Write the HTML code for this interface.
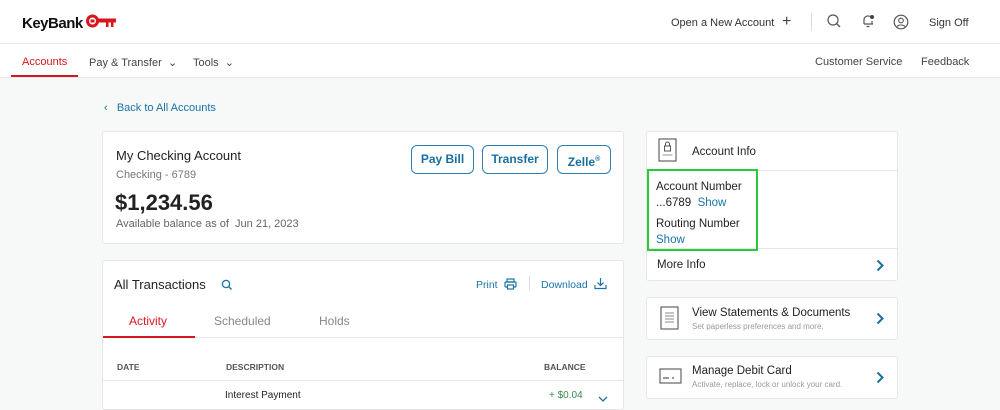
<!DOCTYPE html>
<html><head><meta charset="utf-8"><style>
*{margin:0;padding:0;box-sizing:border-box}
body{width:1000px;height:400px;overflow:hidden;background:#f7f8f8;font-family:"Liberation Sans",sans-serif;color:#222;position:relative}
.a{position:absolute;white-space:nowrap}
.blue{color:#1a73a8}
.card{position:absolute;background:#fff;border:1px solid #e6e6e6;border-radius:3px}
.btn{position:absolute;border:1px solid #2a7fae;border-radius:6px;color:#1a6fa0;font-size:12px;font-weight:bold;text-align:center;line-height:27px;height:29px;top:145px}
.chev{position:absolute;left:876px}
</style></head><body>
<div class="a" style="left:0;top:0;width:1000px;height:44px;background:#fff;border-bottom:1px solid #eaeaea"></div>
<div class="a" style="left:0;top:44px;width:1000px;height:34px;background:#fff;border-bottom:1px solid #eaeaea"></div>
<div class="a" style="left:22px;top:15px;font-size:15px;font-weight:bold;letter-spacing:-0.5px;color:#111">KeyBank</div>
<svg class="a" style="left:86px;top:14px" width="32" height="14" viewBox="0 0 32 14"><circle cx="6.5" cy="7" r="5" fill="none" stroke="#d7171f" stroke-width="3"/><rect x="4.5" y="5.5" width="4" height="3" fill="#d7171f"/><rect x="11" y="4.5" width="19" height="4" fill="#d7171f"/><rect x="20" y="8" width="2.5" height="5" fill="#d7171f"/><rect x="25" y="8" width="2.5" height="5" fill="#d7171f"/></svg>
<div class="a" style="left:671px;top:17px;font-size:11px;color:#333">Open a New Account</div>
<div class="a" style="left:782px;top:13px;font-size:16px;color:#444">+</div>
<div class="a" style="left:811px;top:13px;width:1px;height:18px;background:#ddd"></div>
<svg class="a" style="left:827px;top:14px" width="14" height="15"><circle cx="6" cy="6" r="5" fill="none" stroke="#555" stroke-width="1.2"/><line x1="9.5" y1="9.5" x2="13" y2="13" stroke="#555" stroke-width="1.3"/></svg>
<svg class="a" style="left:861px;top:13px" width="14" height="16"><path d="M3 11V7a4 4 0 0 1 6-3.5M3 11h9M11 8v3M5.5 13.5h3" fill="none" stroke="#555" stroke-width="1.2"/><circle cx="11" cy="4" r="2" fill="#444"/></svg>
<svg class="a" style="left:893px;top:14px" width="16" height="16"><circle cx="8" cy="8" r="6.8" fill="none" stroke="#555" stroke-width="1.2"/><circle cx="8" cy="6.5" r="2.3" fill="none" stroke="#555" stroke-width="1.1"/><path d="M4 12.5c1.5-2 6.5-2 8 0" fill="none" stroke="#555" stroke-width="1.1"/></svg>
<div class="a" style="left:929px;top:17px;font-size:11px;color:#333">Sign Off</div>
<div class="a" style="left:22px;top:56px;font-size:11px;color:#d7171f">Accounts</div>
<div class="a" style="left:11px;top:75px;width:67px;height:2px;background:#d7171f"></div>
<div class="a" style="left:89px;top:56px;font-size:11px;color:#444">Pay &amp; Transfer &nbsp;⌄</div>
<div class="a" style="left:193px;top:56px;font-size:11px;color:#444">Tools &nbsp;⌄</div>
<div class="a" style="left:815px;top:56px;font-size:11px;color:#444">Customer Service</div>
<div class="a" style="left:921px;top:56px;font-size:11px;color:#444">Feedback</div>
<div class="a blue" style="left:104px;top:102px;font-size:11px">‹ &nbsp;&nbsp;Back to All Accounts</div>

<div class="card" style="left:102px;top:131px;width:522px;height:113px"></div>
<div class="a" style="left:116px;top:148px;font-size:13px;color:#222">My Checking Account</div>
<div class="a" style="left:116px;top:169px;font-size:11px;color:#777">Checking - 6789</div>
<div class="a" style="left:115px;top:190px;font-size:22px;font-weight:bold;color:#222">$1,234.56</div>
<div class="a" style="left:116px;top:218px;font-size:11px;color:#666">Available balance as of &nbsp;Jun 21, 2023</div>
<div class="btn" style="left:411px;width:63px">Pay Bill</div>
<div class="btn" style="left:482px;width:66px">Transfer</div>
<div class="btn" style="left:557px;width:54px">Zelle<sup style="font-size:7px">®</sup></div>

<div class="card" style="left:102px;top:260px;width:522px;height:150px"></div>
<div class="a" style="left:114px;top:277px;font-size:13px;color:#222">All Transactions</div>
<svg class="a" style="left:221px;top:279px" width="12" height="12"><circle cx="5" cy="5" r="3.6" fill="none" stroke="#1a73a8" stroke-width="1.3"/><line x1="7.5" y1="7.5" x2="10.5" y2="10.5" stroke="#1a73a8" stroke-width="1.4"/></svg>
<div class="a blue" style="left:476px;top:279px;font-size:10.5px">Print</div>
<svg class="a" style="left:504px;top:278px" width="13" height="12"><rect x="3" y="1" width="7" height="3" fill="none" stroke="#1a73a8" stroke-width="1.2"/><rect x="1" y="4" width="11" height="5" rx="1" fill="none" stroke="#1a73a8" stroke-width="1.2"/><rect x="3.5" y="7" width="6" height="4" fill="#fff" stroke="#1a73a8" stroke-width="1.2"/></svg>
<div class="a" style="left:529px;top:276px;width:1px;height:14px;background:#ddd"></div>
<div class="a blue" style="left:541px;top:279px;font-size:10.5px">Download</div>
<svg class="a" style="left:594px;top:277px" width="13" height="13"><path d="M6.5 1v7M3.5 5.5l3 3 3-3M1 8v3.5h11V8" fill="none" stroke="#1a73a8" stroke-width="1.2"/></svg>
<div class="a" style="left:129px;top:314px;font-size:12px;color:#d7171f">Activity</div>
<div class="a" style="left:214px;top:314px;font-size:12px;color:#888">Scheduled</div>
<div class="a" style="left:319px;top:314px;font-size:12px;color:#888">Holds</div>
<div class="a" style="left:103px;top:337px;width:520px;height:1px;background:#e6e6e6"></div>
<div class="a" style="left:103px;top:336px;width:92px;height:2px;background:#d7171f"></div>
<div class="a" style="left:117px;top:362px;font-size:8.5px;font-weight:bold;color:#555">DATE</div>
<div class="a" style="left:226px;top:362px;font-size:8.5px;font-weight:bold;color:#555">DESCRIPTION</div>
<div class="a" style="left:544px;top:362px;font-size:8.5px;font-weight:bold;color:#555">BALANCE</div>
<div class="a" style="left:103px;top:380px;width:520px;height:1px;background:#e6e6e6"></div>
<div class="a" style="left:225px;top:390px;font-size:10px;color:#222">Interest Payment</div>
<div class="a" style="left:549px;top:390px;font-size:10px;color:#3a8a4a">+ $0.04</div>
<svg class="a" style="left:598px;top:396px" width="10" height="6"><path d="M1 1l4 4 4-4" fill="none" stroke="#1a73a8" stroke-width="1.3"/></svg>

<div class="card" style="left:646px;top:131px;width:252px;height:150px"></div>
<svg class="a" style="left:658px;top:138px" width="20" height="25"><rect x="1" y="1" width="17" height="22" fill="none" stroke="#555" stroke-width="1.1"/><rect x="6.5" y="8" width="6" height="5" fill="none" stroke="#555"/><path d="M7.5 8V6a2 2 0 0 1 4 0v2" fill="none" stroke="#555"/><line x1="4.5" y1="17" x2="14.5" y2="17" stroke="#999"/></svg>
<div class="a" style="left:692px;top:146px;font-size:11.5px;color:#222">Account Info</div>
<div class="a" style="left:647px;top:170px;width:250px;height:1px;background:#e6e6e6"></div>
<div class="a" style="left:647px;top:248px;width:250px;height:1px;background:#e6e6e6"></div>
<div class="a" style="left:647px;top:169px;width:111px;height:82px;border:2px solid #29c93c"></div>
<div class="a" style="left:656px;top:181px;font-size:11.5px;color:#222">Account Number</div>
<div class="a" style="left:656px;top:197px;font-size:11.5px;color:#222">...6789 &nbsp;<span class="blue">Show</span></div>
<div class="a" style="left:656px;top:218px;font-size:11.5px;color:#222">Routing Number</div>
<div class="a blue" style="left:656px;top:234px;font-size:11.5px">Show</div>
<div class="a" style="left:657px;top:259px;font-size:11.5px;color:#222">More Info</div>
<svg class="chev" style="top:259px" width="8" height="13"><path d="M1.5 1.5l5 5-5 5" fill="none" stroke="#1a6fa0" stroke-width="2"/></svg>

<div class="card" style="left:646px;top:297px;width:252px;height:43px"></div>
<svg class="a" style="left:660px;top:306px" width="20" height="25"><rect x="1" y="1" width="17" height="22" fill="none" stroke="#555" stroke-width="1.1"/><path d="M5 7h9M5 10h9M5 13h9M5 16h9" stroke="#888"/></svg>
<div class="a" style="left:692px;top:307px;font-size:11.5px;color:#222">View Statements &amp; Documents</div>
<div class="a" style="left:692px;top:322px;font-size:8px;color:#999">Set paperless preferences and more.</div>
<svg class="chev" style="top:312px" width="8" height="13"><path d="M1.5 1.5l5 5-5 5" fill="none" stroke="#1a6fa0" stroke-width="2"/></svg>

<div class="card" style="left:646px;top:356px;width:252px;height:43px"></div>
<svg class="a" style="left:659px;top:368px" width="24" height="17"><rect x="1" y="1" width="21" height="14" fill="none" stroke="#555" stroke-width="1.1"/><path d="M4 10h6M13 10h2" stroke="#777" stroke-width="1.5"/></svg>
<div class="a" style="left:692px;top:365px;font-size:11.5px;color:#222">Manage Debit Card</div>
<div class="a" style="left:692px;top:380px;font-size:8px;color:#999">Activate, replace, lock or unlock your card.</div>
<svg class="chev" style="top:371px" width="8" height="13"><path d="M1.5 1.5l5 5-5 5" fill="none" stroke="#1a6fa0" stroke-width="2"/></svg>
</body></html>
